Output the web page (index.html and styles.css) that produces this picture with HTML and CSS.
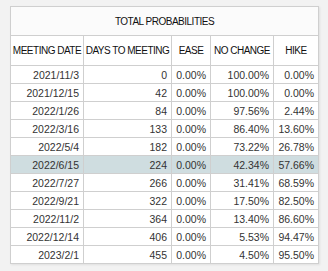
FILE: index.html
```html
<!DOCTYPE html>
<html>
<head>
<meta charset="utf-8">
<link rel="stylesheet" href="styles.css">
</head>
<body>
<div class="panel">
<table class="prob">
<colgroup>
<col class="c1"><col class="c2"><col class="c3"><col class="c4"><col class="c5">
</colgroup>
<thead>
<tr class="title"><th colspan="5">TOTAL PROBABILITIES</th></tr>
<tr class="head"><th>MEETING DATE</th><th>DAYS TO MEETING</th><th>EASE</th><th>NO CHANGE</th><th>HIKE</th></tr>
</thead>
<tbody>
<tr><td>2021/11/3</td><td>0</td><td>0.00%</td><td>100.00%</td><td>0.00%</td></tr>
<tr><td>2021/12/15</td><td>42</td><td>0.00%</td><td>100.00%</td><td>0.00%</td></tr>
<tr><td>2022/1/26</td><td>84</td><td>0.00%</td><td>97.56%</td><td>2.44%</td></tr>
<tr><td>2022/3/16</td><td>133</td><td>0.00%</td><td>86.40%</td><td>13.60%</td></tr>
<tr><td>2022/5/4</td><td>182</td><td>0.00%</td><td>73.22%</td><td>26.78%</td></tr>
<tr class="hl"><td>2022/6/15</td><td>224</td><td>0.00%</td><td>42.34%</td><td>57.66%</td></tr>
<tr><td>2022/7/27</td><td>266</td><td>0.00%</td><td>31.41%</td><td>68.59%</td></tr>
<tr><td>2022/9/21</td><td>322</td><td>0.00%</td><td>17.50%</td><td>82.50%</td></tr>
<tr><td>2022/11/2</td><td>364</td><td>0.00%</td><td>13.40%</td><td>86.60%</td></tr>
<tr><td>2022/12/14</td><td>406</td><td>0.00%</td><td>5.53%</td><td>94.47%</td></tr>
<tr><td>2023/2/1</td><td>455</td><td>0.00%</td><td>4.50%</td><td>95.50%</td></tr>
</tbody>
</table>
</div>
</body>
</html>
```
FILE: styles.css
```css
html, body {
  margin: 0;
  padding: 0;
  background: #f2f2f2;
}
body {
  width: 328px;
  height: 271px;
  overflow: hidden;
  font-family: "Liberation Sans", Arial, sans-serif;
}
.panel {
  padding: 6px 0 0 10px;
}
.prob {
  border-collapse: collapse;
  table-layout: fixed;
  width: 308px;
  background: #fff;
  border: 1px solid #c4c4c4;
  box-shadow: 1px 1px 2px rgba(0,0,0,0.08);
}
.c1 { width: 73px; }
.c2 { width: 88px; }
.c3 { width: 39px; }
.c4 { width: 63px; }
.c5 { width: 45px; }
.prob th, .prob td {
  border: 1px solid #cfcfcf;
  padding: 0 4px 0 0;
  white-space: nowrap;
  overflow: hidden;
}
.prob th {
  font-weight: normal;
  font-size: 10px;
  letter-spacing: -0.5px;
  color: #111;
  text-align: center;
  padding: 0;
}
.title th {
  height: 28px;
  background: #fbfbfb;
}
.head th {
  height: 29px;
}
.prob td {
  font-size: 10.5px;
  color: #333;
  text-align: right;
  height: 17px;
}
.hl td {
  background: #cfdde0;
}
```
